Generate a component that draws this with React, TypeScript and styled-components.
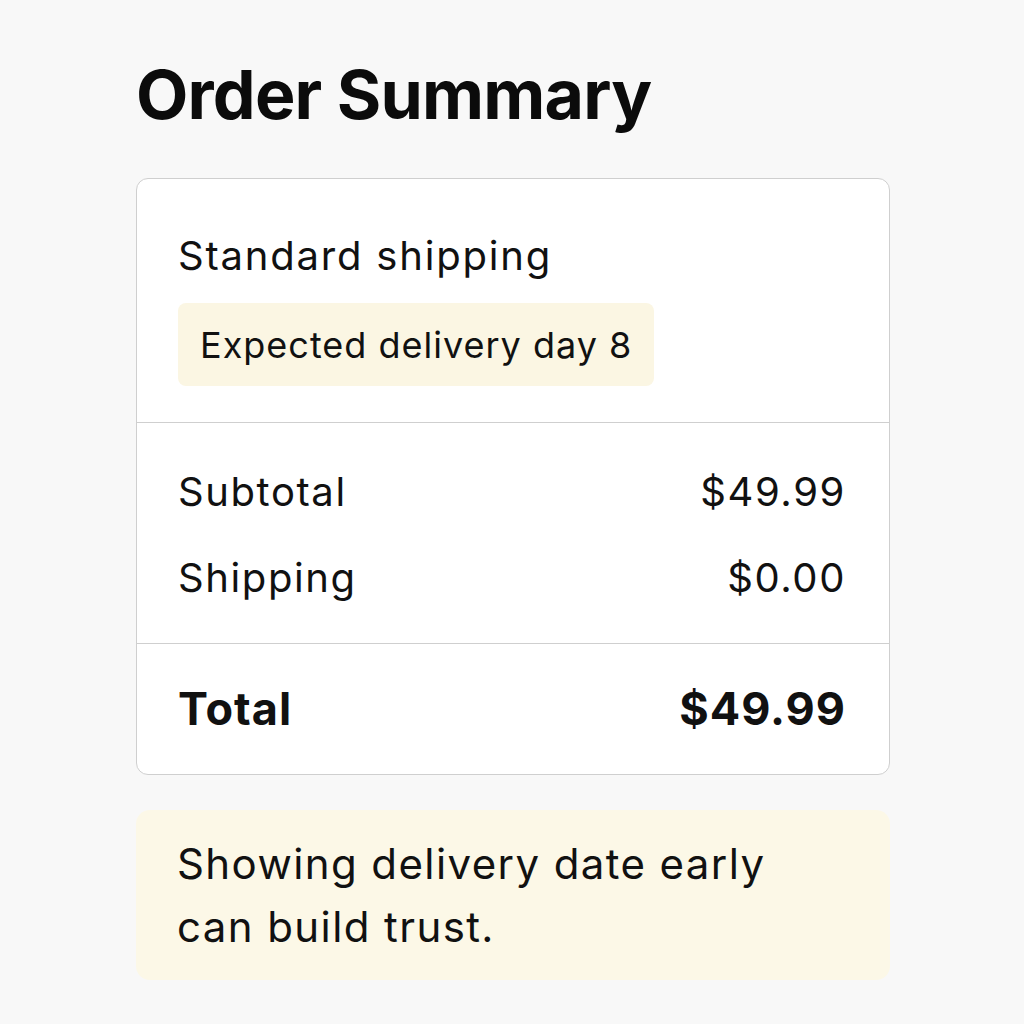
import React from "react";
import styled, { createGlobalStyle } from "styled-components";

const Global = createGlobalStyle`
  html, body { margin: 0; padding: 0; background: #f8f8f8; }
  body { font-family: Inter, "Noto Sans", sans-serif; color: #111; }
`;

const Page = styled.div`
  width: 754px;
  margin: 0 auto 0 136px;
  padding-top: 54px;
  display: flex;
  flex-direction: column;
`;

const Title = styled.h1`
  margin: 0 0 44px;
  font-size: 68px;
  line-height: 80px;
  font-weight: 700;
  letter-spacing: -0.8px;
  color: #0b0b0b;
`;

const Card = styled.div`
  background: #fff;
  border: 1px solid #cfcfcf;
  border-radius: 12px;
  display: flex;
  flex-direction: column;
`;

const Section = styled.div<{ $pt: number; $pb: number; $gap?: number }>`
  padding: ${(p) => p.$pt}px 43px ${(p) => p.$pb}px 41px;
  display: flex;
  flex-direction: column;
  gap: ${(p) => p.$gap ?? 0}px;
  & + & { border-top: 1px solid #cfcfcf; }
`;

const Method = styled.div`
  font-size: 40px;
  line-height: 50px;
  letter-spacing: 1.8px;
  margin-bottom: 22px;
`;

const Badge = styled.div`
  align-self: flex-start;
  background: #fbf6e3;
  border-radius: 8px;
  padding: 0 22px 0 22px;
  height: 83px;
  display: flex;
  align-items: center;
  font-size: 36px;
  letter-spacing: 1px;
`;

const Row = styled.div<{ $bold?: boolean }>`
  display: flex;
  justify-content: space-between;
  align-items: center;
  font-size: ${(p) => (p.$bold ? 45 : 40)}px;
  font-weight: ${(p) => (p.$bold ? 700 : 400)};
  letter-spacing: ${(p) => (p.$bold ? 1 : 1.6)}px;
  line-height: ${(p) => (p.$bold ? 60 : 50)}px;
`;

const Note = styled.div`
  margin-top: 35px;
  background: #fcf8e7;
  border-radius: 14px;
  padding: 22px 42px 22px 41px;
  font-size: 42px;
  line-height: 63px;
  letter-spacing: 1.4px;
`;

export default function App() {
  return (
    <>
      <Global />
      <Page>
        <Title>Order Summary</Title>
        <Card>
          <Section $pt={52} $pb={36}>
            <Method>Standard shipping</Method>
            <Badge>Expected delivery day 8</Badge>
          </Section>
          <Section $pt={44} $pb={40} $gap={36}>
            <Row>
              <span>Subtotal</span>
              <span>$49.99</span>
            </Row>
            <Row>
              <span>Shipping</span>
              <span>$0.00</span>
            </Row>
          </Section>
          <Section $pt={35} $pb={35}>
            <Row $bold>
              <span>Total</span>
              <span>$49.99</span>
            </Row>
          </Section>
        </Card>
        <Note>
          Showing delivery date early
          <br />
          can build trust.
        </Note>
      </Page>
    </>
  );
}
